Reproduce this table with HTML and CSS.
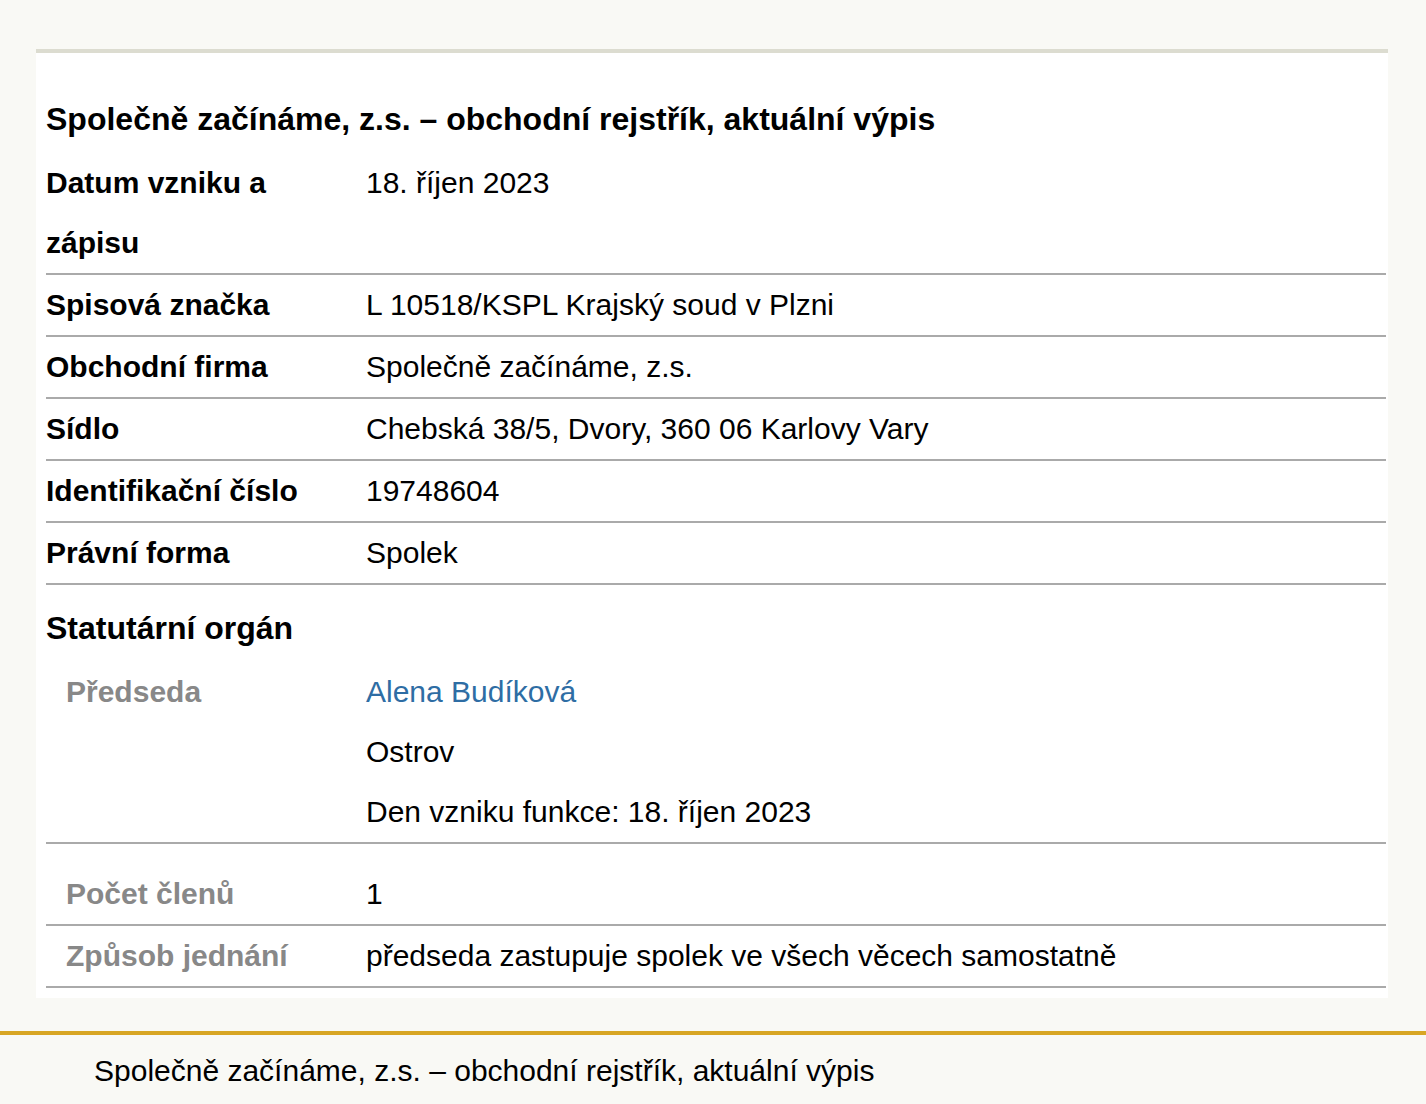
FILE: index.html
```html
<!DOCTYPE html>
<html lang="cs">
<head>
<meta charset="utf-8">
<title>Společně začínáme, z.s. – obchodní rejstřík</title>
<link rel="stylesheet" href="styles.css">
</head>
<body>
<main class="card">
  <h1 class="title">Společně začínáme, z.s. – obchodní rejstřík, aktuální výpis</h1>
  <div class="row">
    <div class="label">Datum vzniku a zápisu</div>
    <div class="value">18. říjen 2023</div>
  </div>
  <div class="row">
    <div class="label">Spisová značka</div>
    <div class="value">L 10518/KSPL Krajský soud v Plzni</div>
  </div>
  <div class="row">
    <div class="label">Obchodní firma</div>
    <div class="value">Společně začínáme, z.s.</div>
  </div>
  <div class="row">
    <div class="label">Sídlo</div>
    <div class="value">Chebská 38/5, Dvory, 360 06 Karlovy Vary</div>
  </div>
  <div class="row">
    <div class="label">Identifikační číslo</div>
    <div class="value">19748604</div>
  </div>
  <div class="row">
    <div class="label">Právní forma</div>
    <div class="value">Spolek</div>
  </div>
  <h2 class="section">Statutární orgán</h2>
  <div class="row sub">
    <div class="label">Předseda</div>
    <div class="value">
      <a class="link" href="#">Alena Budíková</a>
      <div>Ostrov</div>
      <div>Den vzniku funkce: 18. říjen 2023</div>
    </div>
  </div>
  <div class="row sub spaced">
    <div class="label">Počet členů</div>
    <div class="value">1</div>
  </div>
  <div class="row sub">
    <div class="label">Způsob jednání</div>
    <div class="value">předseda zastupuje spolek ve všech věcech samostatně</div>
  </div>
</main>
<footer class="footer">
  <p class="footer-text">Společně začínáme, z.s. – obchodní rejstřík, aktuální výpis</p>
</footer>
</body>
</html>
```

FILE: styles.css
```css
html, body {
  margin: 0;
  padding: 0;
}
body {
  background: #f9f9f5;
  font-family: "Liberation Sans", Arial, sans-serif;
  font-size: 30px;
  line-height: 60px;
  color: #000;
}
.card {
  display: block;
  background: #fff;
  border-top: 4px solid #dcdcd0;
  margin: 49px 38px 0 36px;
  padding: 36px 2px 10px 10px;
}
.title {
  margin: 0 0 4px 0;
  font-size: 32px;
  font-weight: bold;
  line-height: 60px;
}
.row {
  display: grid;
  grid-template-columns: 320px 1fr;
  border-bottom: 2px solid #aaa;
}
.label {
  font-weight: bold;
  padding-right: 10px;
}
.value {
  font-weight: normal;
}
.section {
  margin: 13px 0 4px 0;
  font-size: 32px;
  font-weight: bold;
  line-height: 60px;
}
.sub .label {
  color: #888;
  padding-left: 20px;
}
.spaced {
  padding-top: 20px;
}
.link {
  display: block;
  color: #2e6da4;
  text-decoration: none;
}
.footer {
  margin-top: 33px;
  border-top: 4px solid #d8a624;
  padding: 0 0 0 94px;
}
.footer-text {
  margin: 0;
  font-size: 30px;
  line-height: 72px;
}
```
